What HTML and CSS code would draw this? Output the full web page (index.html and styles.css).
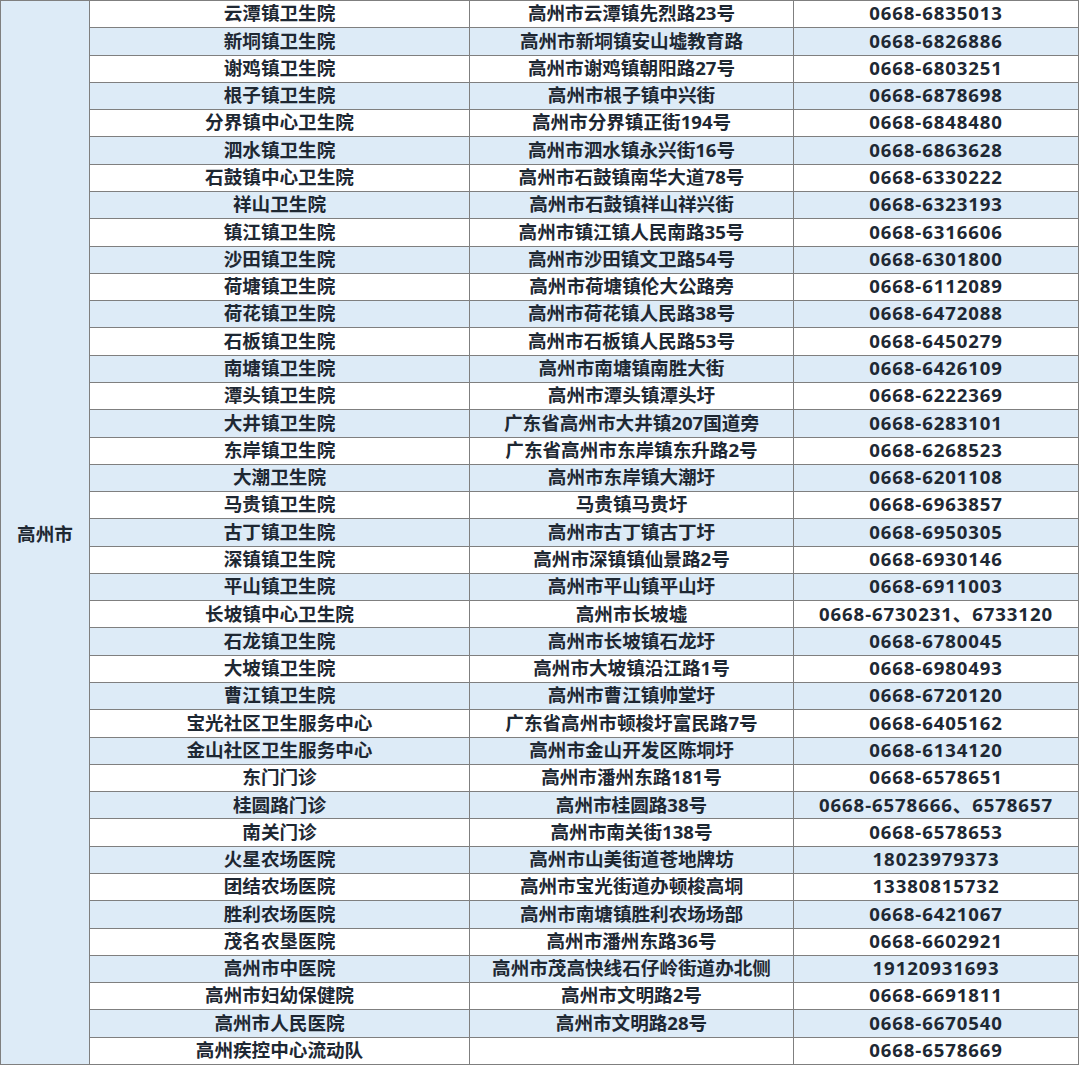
FILE: index.html
```html
<!DOCTYPE html>
<html lang="zh-CN">
<head>
<meta charset="utf-8">
<link rel="stylesheet" href="styles.css">
</head>
<body>
<div class="sheet">
  <div class="city">高州市</div>
  <div class="c n">云潭镇卫生院</div><div class="c a">高州市云潭镇先烈路23号</div><div class="c p">0668-6835013</div>
  <div class="c n b">新垌镇卫生院</div><div class="c a b">高州市新垌镇安山墟教育路</div><div class="c p b">0668-6826886</div>
  <div class="c n">谢鸡镇卫生院</div><div class="c a">高州市谢鸡镇朝阳路27号</div><div class="c p">0668-6803251</div>
  <div class="c n b">根子镇卫生院</div><div class="c a b">高州市根子镇中兴街</div><div class="c p b">0668-6878698</div>
  <div class="c n">分界镇中心卫生院</div><div class="c a">高州市分界镇正街194号</div><div class="c p">0668-6848480</div>
  <div class="c n b">泗水镇卫生院</div><div class="c a b">高州市泗水镇永兴街16号</div><div class="c p b">0668-6863628</div>
  <div class="c n">石鼓镇中心卫生院</div><div class="c a">高州市石鼓镇南华大道78号</div><div class="c p">0668-6330222</div>
  <div class="c n b">祥山卫生院</div><div class="c a b">高州市石鼓镇祥山祥兴街</div><div class="c p b">0668-6323193</div>
  <div class="c n">镇江镇卫生院</div><div class="c a">高州市镇江镇人民南路35号</div><div class="c p">0668-6316606</div>
  <div class="c n b">沙田镇卫生院</div><div class="c a b">高州市沙田镇文卫路54号</div><div class="c p b">0668-6301800</div>
  <div class="c n">荷塘镇卫生院</div><div class="c a">高州市荷塘镇伦大公路旁</div><div class="c p">0668-6112089</div>
  <div class="c n b">荷花镇卫生院</div><div class="c a b">高州市荷花镇人民路38号</div><div class="c p b">0668-6472088</div>
  <div class="c n">石板镇卫生院</div><div class="c a">高州市石板镇人民路53号</div><div class="c p">0668-6450279</div>
  <div class="c n b">南塘镇卫生院</div><div class="c a b">高州市南塘镇南胜大街</div><div class="c p b">0668-6426109</div>
  <div class="c n">潭头镇卫生院</div><div class="c a">高州市潭头镇潭头圩</div><div class="c p">0668-6222369</div>
  <div class="c n b">大井镇卫生院</div><div class="c a b">广东省高州市大井镇207国道旁</div><div class="c p b">0668-6283101</div>
  <div class="c n">东岸镇卫生院</div><div class="c a">广东省高州市东岸镇东升路2号</div><div class="c p">0668-6268523</div>
  <div class="c n b">大潮卫生院</div><div class="c a b">高州市东岸镇大潮圩</div><div class="c p b">0668-6201108</div>
  <div class="c n">马贵镇卫生院</div><div class="c a">马贵镇马贵圩</div><div class="c p">0668-6963857</div>
  <div class="c n b">古丁镇卫生院</div><div class="c a b">高州市古丁镇古丁圩</div><div class="c p b">0668-6950305</div>
  <div class="c n">深镇镇卫生院</div><div class="c a">高州市深镇镇仙景路2号</div><div class="c p">0668-6930146</div>
  <div class="c n b">平山镇卫生院</div><div class="c a b">高州市平山镇平山圩</div><div class="c p b">0668-6911003</div>
  <div class="c n">长坡镇中心卫生院</div><div class="c a">高州市长坡墟</div><div class="c p">0668-6730231、6733120</div>
  <div class="c n b">石龙镇卫生院</div><div class="c a b">高州市长坡镇石龙圩</div><div class="c p b">0668-6780045</div>
  <div class="c n">大坡镇卫生院</div><div class="c a">高州市大坡镇沿江路1号</div><div class="c p">0668-6980493</div>
  <div class="c n b">曹江镇卫生院</div><div class="c a b">高州市曹江镇帅堂圩</div><div class="c p b">0668-6720120</div>
  <div class="c n">宝光社区卫生服务中心</div><div class="c a">广东省高州市顿梭圩富民路7号</div><div class="c p">0668-6405162</div>
  <div class="c n b">金山社区卫生服务中心</div><div class="c a b">高州市金山开发区陈垌圩</div><div class="c p b">0668-6134120</div>
  <div class="c n">东门门诊</div><div class="c a">高州市潘州东路181号</div><div class="c p">0668-6578651</div>
  <div class="c n b">桂圆路门诊</div><div class="c a b">高州市桂圆路38号</div><div class="c p b">0668-6578666、6578657</div>
  <div class="c n">南关门诊</div><div class="c a">高州市南关街138号</div><div class="c p">0668-6578653</div>
  <div class="c n b">火星农场医院</div><div class="c a b">高州市山美街道苍地牌坊</div><div class="c p b">18023979373</div>
  <div class="c n">团结农场医院</div><div class="c a">高州市宝光街道办顿梭高垌</div><div class="c p">13380815732</div>
  <div class="c n b">胜利农场医院</div><div class="c a b">高州市南塘镇胜利农场场部</div><div class="c p b">0668-6421067</div>
  <div class="c n">茂名农垦医院</div><div class="c a">高州市潘州东路36号</div><div class="c p">0668-6602921</div>
  <div class="c n b">高州市中医院</div><div class="c a b">高州市茂高快线石仔岭街道办北侧</div><div class="c p b">19120931693</div>
  <div class="c n">高州市妇幼保健院</div><div class="c a">高州市文明路2号</div><div class="c p">0668-6691811</div>
  <div class="c n b">高州市人民医院</div><div class="c a b">高州市文明路28号</div><div class="c p b">0668-6670540</div>
  <div class="c n">高州疾控中心流动队</div><div class="c a"></div><div class="c p">0668-6578669</div>
</div>
</body>
</html>
```

FILE: styles.css
```css
html, body {
  margin: 0;
  padding: 0;
  background: #ffffff;
}
.sheet {
  box-sizing: border-box;
  width: 1079px;
  height: 1065px;
  display: grid;
  grid-template-columns: 89px 380px 324px 285px;
  grid-template-rows: repeat(39, 1fr);
  border-left: 1px solid #7f7f7f;
  border-top: 1px solid #7f7f7f;
  font-family: "Open Sans", "Noto Sans CJK SC", sans-serif;
  font-weight: 700;
  font-size: 18.6px;
  color: #1e2833;
}
.city {
  grid-column: 1;
  grid-row: 1 / span 39;
  background: #ddebf7;
  border-right: 1px solid #7f7f7f;
  border-bottom: 1px solid #7f7f7f;
  display: flex;
  align-items: center;
  justify-content: center;
}
.c {
  box-sizing: border-box;
  display: flex;
  align-items: center;
  justify-content: center;
  border-right: 1px solid #7f7f7f;
  border-bottom: 1px solid #7f7f7f;
  white-space: nowrap;
  line-height: 1;
  padding-bottom: 1px;
  background: #ffffff;
}
.c.b {
  background: #ddebf7;
}
.n { grid-column: 2; }
.a { grid-column: 3; }
.p {
  grid-column: 4;
  letter-spacing: 0.9px;
}
```
